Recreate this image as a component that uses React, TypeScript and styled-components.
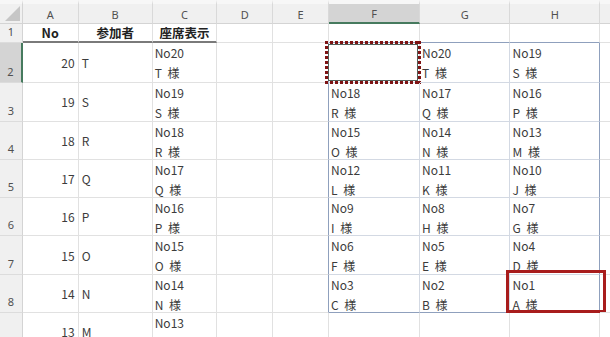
import React from 'react';
import styled, { createGlobalStyle } from 'styled-components';

const GlobalStyle = createGlobalStyle`
  html, body { margin: 0; padding: 0; background: #fff; }
  body { font-family: "Noto Sans CJK JP", "Noto Sans", sans-serif; }
`;

const GRID = '#e1e1e1';
const RANGE_OUT = '#8fa0bd';
const RANGE_IN = '#d3d9e3';
const SELECT = '#467a5e';

const cols = ['A', 'B', 'C', 'D', 'E', 'F', 'G', 'H', 'I'];

type Entry = { no: string; name: string } | null;

const people = [
  { n: 20, c: 'T' }, { n: 19, c: 'S' }, { n: 18, c: 'R' }, { n: 17, c: 'Q' },
  { n: 16, c: 'P' }, { n: 15, c: 'O' }, { n: 14, c: 'N' }, { n: 13, c: 'M' },
];

const seats: Entry[][] = [
  [null, { no: 'No20', name: 'T' }, { no: 'No19', name: 'S' }],
  [{ no: 'No18', name: 'R' }, { no: 'No17', name: 'Q' }, { no: 'No16', name: 'P' }],
  [{ no: 'No15', name: 'O' }, { no: 'No14', name: 'N' }, { no: 'No13', name: 'M' }],
  [{ no: 'No12', name: 'L' }, { no: 'No11', name: 'K' }, { no: 'No10', name: 'J' }],
  [{ no: 'No9', name: 'I' }, { no: 'No8', name: 'H' }, { no: 'No7', name: 'G' }],
  [{ no: 'No6', name: 'F' }, { no: 'No5', name: 'E' }, { no: 'No4', name: 'D' }],
  [{ no: 'No3', name: 'C' }, { no: 'No2', name: 'B' }, { no: 'No1', name: 'A' }],
];

export default function App() {
  const rows = [];
  for (let rowNo = 1; rowNo <= 9; rowNo++) {
    const cells = [];
    cols.forEach((col, ci) => {
      const inRange = ci >= 5 && ci <= 7 && rowNo >= 2 && rowNo <= 8;
      // border colours of this cell (right and bottom edges)
      let right = GRID;
      let bottom = GRID;
      let bw = 1;
      if (rowNo === 1 && ci <= 2) { bottom = '#7a7a7a'; bw = 2; }
      if (rowNo === 1 && ci >= 5 && ci <= 7) bottom = RANGE_OUT;
      if (ci === 4 && rowNo >= 2 && rowNo <= 8) right = RANGE_OUT;
      if (inRange) {
        right = ci === 7 ? RANGE_OUT : RANGE_IN;
        bottom = rowNo === 8 ? RANGE_OUT : RANGE_IN;
      }

      let content: React.ReactNode = null;
      let kind: 'plain' | 'num' | 'head' | 'wrap' = 'plain';
      if (rowNo === 1) {
        kind = 'head';
        content = ['No', '参加者', '座席表示'][ci] ?? null;
      } else {
        const p = people[rowNo - 2];
        if (ci === 0) { kind = 'num'; content = p.n; }
        if (ci === 1) content = p.c;
        if (ci === 2) {
          kind = 'wrap';
          content = (<><Line>No{p.n}</Line><Line>{p.c} 様</Line></>);
        }
        if (inRange) {
          kind = 'wrap';
          const s = seats[rowNo - 2][ci - 5];
          content = s ? (<><Line>{s.no}</Line><Line>{s.name} 様</Line></>) : null;
        }
      }

      cells.push(
        <Cell key={col} $kind={kind} $right={right} $bottom={bottom} $bw={bw}>
          {content}
          {rowNo === 2 && col === 'F' && <Marquee />}
          {rowNo === 8 && col === 'H' && <Highlight />}
        </Cell>
      );
    });
    rows.push(
      <React.Fragment key={rowNo}>
        <RowHead $active={rowNo === 2}>{rowNo}</RowHead>
        {cells}
      </React.Fragment>
    );
  }

  return (
    <>
      <GlobalStyle />
      <Sheet>
        <Corner>
          <svg width="15" height="15" viewBox="0 0 15 15">
            <polygon points="15,0 15,15 0,15" fill="#c6c6c6" />
          </svg>
        </Corner>
        {cols.map((c) => (
          <ColHead key={c} $active={c === 'F'}>{c === 'I' ? '' : c}</ColHead>
        ))}
        {rows}
      </Sheet>
    </>
  );
}

const Sheet = styled.div`
  position: relative;
  width: 610px;
  height: 337px;
  overflow: hidden;
  display: grid;
  grid-template-columns: 22.7px 56px 74px 64.8px 55.5px 56px 91px 90.5px 89.5px 40px;
  grid-template-rows: 24px 19px 39.5px 39px 38.3px 38.3px 38.4px 38.3px 38.3px 38.5px;
  background: #fff;
  color: #3a3a3a;
`;

const HeadBase = styled.div`
  box-sizing: border-box;
  background: #f0f0f0;
  font-family: "Noto Sans", "Liberation Sans", sans-serif;
  font-size: 11px;
  color: #505050;
  display: flex;
  justify-content: center;
`;

const Corner = styled(HeadBase)`
  border-top: 4px solid #f7f7f7;
  border-right: 1px solid #d4d4d4;
  border-bottom: 1px solid #d4d4d4;
  align-items: flex-end;
  justify-content: flex-end;
  padding: 0 2px 2px 0;
`;

const ColHead = styled(HeadBase)<{ $active?: boolean }>`
  align-items: center;
  border-top: 4px solid #f7f7f7;
  border-right: 1px solid #d9d9d9;
  border-bottom: ${(p) => (p.$active ? `2px solid ${SELECT}` : '1px solid #d4d4d4')};
  background: ${(p) => (p.$active ? '#d4d4d4' : '#f0f0f0')};
  padding-top: 1px;
`;

const RowHead = styled(HeadBase)<{ $active?: boolean }>`
  align-items: flex-end;
  padding-bottom: 3px;
  border-bottom: 1px solid #dcdcdc;
  border-right: ${(p) => (p.$active ? `2px solid ${SELECT}` : '1px solid #d4d4d4')};
  background: ${(p) => (p.$active ? '#d4d4d4' : '#f0f0f0')};
`;

const Cell = styled.div<{ $kind: string; $right: string; $bottom: string; $bw: number }>`
  position: relative;
  box-sizing: border-box;
  border-right: 1px solid ${(p) => p.$right};
  border-bottom: ${(p) => p.$bw}px solid ${(p) => p.$bottom};
  white-space: nowrap;
  display: flex;
  flex-direction: ${(p) => (p.$kind === 'wrap' ? 'column' : 'row')};
  align-items: ${(p) => (p.$kind === 'wrap' ? 'flex-start' : 'center')};
  justify-content: ${(p) =>
    p.$kind === 'num' ? 'flex-end' : p.$kind === 'head' ? 'center' : 'flex-start'};
  padding: ${(p) => (p.$kind === 'wrap' ? '0 2px' : '0 3px')};
  font-weight: ${(p) => (p.$kind === 'head' ? 700 : 400)};
  font-size: ${(p) => (p.$kind === 'head' ? '12.5px' : '12px')};
  color: ${(p) => (p.$kind === 'head' ? '#222' : '#3c3c3c')};
`;

const Line = styled.div`
  line-height: 20px;
  height: 20px;
  word-spacing: 3px;
`;

const Marquee = styled.div`
  position: absolute;
  left: -4px;
  top: -2px;
  right: -2px;
  bottom: -2px;
  background:
    repeating-linear-gradient(90deg, #7e1414 0 3px, transparent 3px 5px) top left / 100% 3px no-repeat,
    repeating-linear-gradient(90deg, #7e1414 0 3px, transparent 3px 5px) bottom left / 100% 3px no-repeat,
    repeating-linear-gradient(180deg, #7e1414 0 3px, transparent 3px 5px) top left / 3px 100% no-repeat,
    repeating-linear-gradient(180deg, #7e1414 0 3px, transparent 3px 5px) top right / 3px 100% no-repeat;

  &::after {
    content: "";
    position: absolute;
    inset: 3px;
    border: 1px solid #51605a;
  }
`;

const Highlight = styled.div`
  position: absolute;
  left: -4px;
  top: -4.5px;
  right: -7px;
  bottom: -1px;
  border: 3px solid #a81c1c;
`;
